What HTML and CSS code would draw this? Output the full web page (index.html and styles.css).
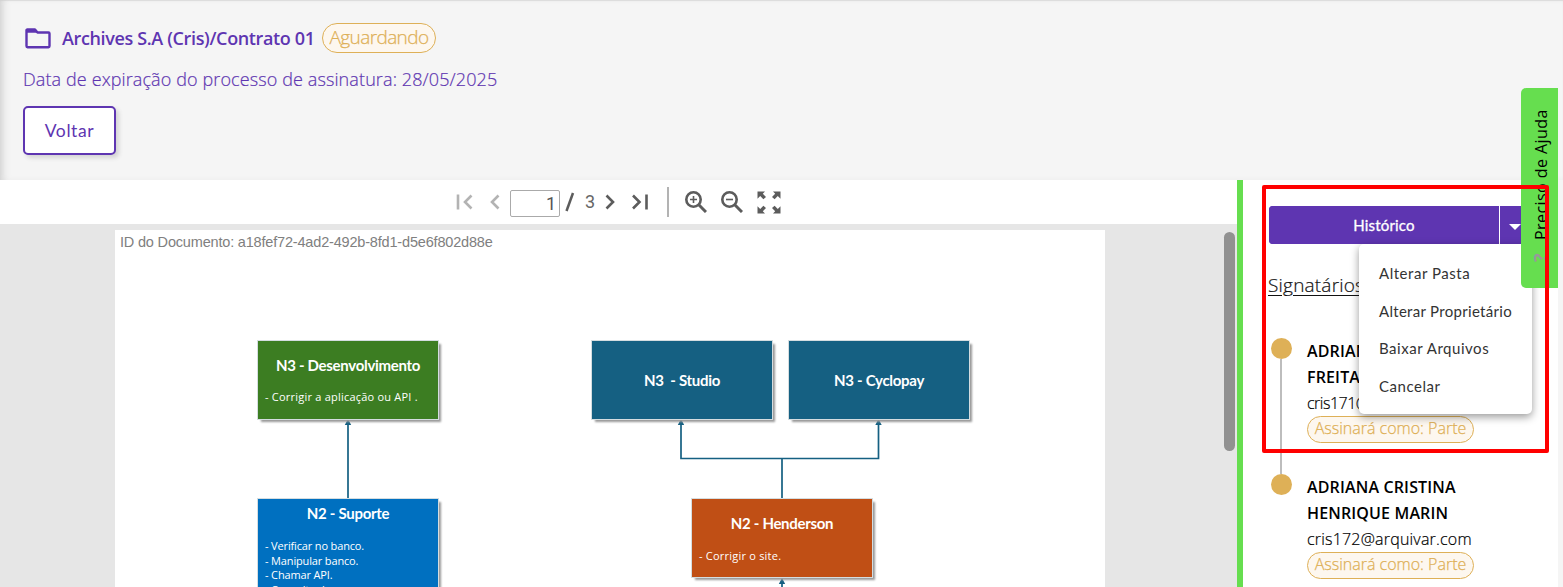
FILE: index.html
```
<!DOCTYPE html>
<html lang="pt-BR">
<head>
<meta charset="utf-8">
<title>Contrato 01</title>
<link rel="stylesheet" href="styles.css">
</head>
<body>
<div class="app">
  <header class="header">
    <div class="title-row">
      <svg class="folder" viewBox="0 0 26 21"><path d="M2.2 1.5H10l2.5 3H23.5q1 0 1 1V18q0 1.200-1 1.200H2.500q-1 0-1-1.200V2z" fill="none" stroke="#5e35b1" stroke-width="2.400" stroke-linejoin="round"/><path d="M1.500 1.200H10l3 3.500H1.500z" fill="#5e35b1"/></svg>
      <h1 class="title">Archives S.A (Cris)/Contrato 01</h1>
      <span class="status">Aguardando</span>
    </div>
    <p class="expiry">Data de expiração do processo de assinatura: 28/05/2025</p>
    <button class="back">Voltar</button>
  </header>
  <div class="body">
    <main class="viewer">
      <div class="toolbar">
        <svg class="ic first" viewBox="0 0 18 18"><path d="M2 1.500V16.500M15.500 2.500L9 9l6.500 6.500"/></svg>
        <svg class="ic prev" viewBox="0 0 10 18"><path d="M8.500 2.500L2 9l6.500 6.500"/></svg>
        <div class="page-input">1</div>
        <svg class="slash" viewBox="0 0 10 20"><path d="M1.500 19L8 1"/></svg>
        <span class="total">3</span>
        <svg class="ic next" viewBox="0 0 10 18"><path d="M1.500 2.500L8 9l-6.500 6.500"/></svg>
        <svg class="ic last" viewBox="0 0 18 18"><path d="M2 2.500L8.500 9 2 15.500M15.500 1.500V16.500"/></svg>
        <span class="divider"></span>
        <svg class="ic zoom" viewBox="0 0 22 22"><circle cx="8.500" cy="8.500" r="7.200"/><path d="M13.500 13.500L21 21" stroke-width="3"/><path d="M5 8.500h7M8.500 5v7" stroke-width="1.600"/></svg>
        <svg class="ic zoom out" viewBox="0 0 22 22"><circle cx="8.500" cy="8.500" r="7.200"/><path d="M13.500 13.500L21 21" stroke-width="3"/><path d="M5 8.500h7" stroke-width="1.600"/></svg>
        <svg class="full" viewBox="0 0 24 23"><g id="c"><path d="M.5.5H8L5.800 2.700 9 5.900 6.400 8.300 3.200 5.100.5 7.800z"/></g><use href="#c" transform="matrix(-1 0 0 1 24 0)"/><use href="#c" transform="matrix(1 0 0 -1 0 23)"/><use href="#c" transform="matrix(-1 0 0 -1 24 23)"/></svg>
      </div>
      <div class="canvas">
        <div class="sheet">
          <p class="doc-id">ID do Documento: a18fef72-4ad2-492b-8fd1-d5e6f802d88e</p>
          <svg class="edges" viewBox="0 0 990 357" fill="none" stroke="#156082" stroke-width="1.700">
            <path d="M233 269V194M667 269V228.500M566 194V228.500H763.500V194M667 357V352"/>
            <path stroke="none" fill="#156082" d="M233 189l3.200 6h-6.400zM566 189l3.200 6h-6.400zM763.500 189l3.200 6h-6.400zM667 348l3.200 6h-6.400z"/>
          </svg>
          <section class="node dev"><h2>N3 - Desenvolvimento</h2><p>- Corrigir a aplicação ou API .</p></section>
          <section class="node studio"><h2>N3 &nbsp;- Studio</h2></section>
          <section class="node cyclo"><h2>N3 - Cyclopay</h2></section>
          <section class="node sup"><h2>N2 - Suporte</h2><p>- Verificar no banco.<br>- Manipular banco.<br>- Chamar API.<br>- Consultar logs.</p></section>
          <section class="node hend"><h2>N2 - Henderson</h2><p>- Corrigir o site.</p></section>
        </div>
        <div class="scroll"></div>
      </div>
    </main>
    <aside class="side">
      <div class="split"><button class="hist">Histórico</button><button class="caret"><i></i></button></div>
      <h3 class="signers">Signatários</h3>
      <ul class="steps">
        <li><b>ADRIANA</b><b>FREITAS</b><em class="mail-tight">cris171@arquivar.com</em><small class="role">Assinará como: Parte</small></li>
        <li><b>ADRIANA CRISTINA</b><b>HENRIQUE MARIN</b><em>cris172@arquivar.com</em><small class="role">Assinará como: Parte</small></li>
      </ul>
      <nav class="menu"><a>Alterar Pasta</a><a class="long">Alterar Proprietário</a><a>Baixar Arquivos</a><a>Cancelar</a></nav>
    </aside>
  </div>
  <div class="help"><span class="q">?</span><span class="help-text">Preciso de Ajuda</span></div>
  <div class="highlight"></div>
</div>
</body>
</html>
```
FILE: styles.css
```
* { box-sizing: border-box; }
body { margin: 0; font-family: "Open Sans", "Noto Sans", sans-serif; color: #111; }
h1, h2, h3, p, ul { margin: 0; padding: 0; font-weight: 400; }
button { font: inherit; padding: 0; margin: 0; border: 0; }
.app { position: relative; width: 1563px; height: 587px; overflow: hidden; display: flex; flex-direction: column; background: #f5f5f5; }
.header { height: 180px; flex: none; padding: 23px 23px 0; background: #f5f5f5; box-shadow: inset 7px 0 8px -5px #ccc, inset 0 1px 1px #ddd; color: #5e35b1; }
.title-row { display: flex; align-items: center; height: 30px; }
.folder { width: 26px; height: 21px; margin: 0 11px 0 2px; }
.title { width: 260px; font-size: 18px; font-weight: 600; line-height: 29px; letter-spacing: -.36px; white-space: nowrap; }
.status { height: 30px; width: 114px; border: 1px solid #deb057; border-radius: 15px; background: #fdf7ef; color: #deb057; font-size: 19px; font-weight: 300; letter-spacing: -.6px; line-height: 27px; text-align: center; -webkit-text-stroke: .25px; }
.expiry { margin-top: 13px; font-size: 18px; font-weight: 300; letter-spacing: .11px; line-height: 26px; white-space: nowrap; -webkit-text-stroke: .2px; }
.back { display: block; width: 93px; height: 49px; margin-top: 14px; border: 2px solid #5e35b1; border-radius: 5px; background: #fff; color: #5e35b1; font-family: Lato, sans-serif; font-size: 17.500px; letter-spacing: .6px; box-shadow: 3px 3px 4px #d4d4d4; }
.body { display: flex; flex: 1; min-height: 0; width: 1558px; background: #fff; }
.viewer { width: 1237px; display: flex; flex-direction: column; }
.toolbar { height: 44px; display: flex; align-items: center; padding-left: 456px; }
.ic { fill: none; stroke: #5c5c5c; stroke-width: 2.600; flex: none; height: 18px; }
.first { width: 18px; stroke: #b3b3b3; }
.prev { width: 10px; margin-left: 16px; stroke: #b3b3b3; }
.page-input { width: 50px; height: 27px; margin: 3px 0 0 10px; border: 1px solid #aaa; border-radius: 2px; text-align: right; padding-right: 3px; font: 18px/25px Roboto, sans-serif; color: #555; }
.slash { width: 10px; height: 20px; margin-left: 5px; fill: none; stroke: #5c5c5c; stroke-width: 2.500; }
.total { margin-left: 10px; font: 18px/20px Roboto, sans-serif; color: #666; }
.next { width: 10px; margin-left: 10px; }
.last { width: 18px; margin-left: 16px; }
.divider { width: 2px; height: 30px; margin-left: 18px; background: #b3b3b3; }
.zoom { width: 22px; height: 22px; margin-left: 16px; }
.out { margin-left: 14px; }
.full { width: 24px; height: 23px; margin-left: 14px; fill: #5c5c5c; }
.canvas { flex: 1; min-height: 0; display: flex; background: #e6e6e6; padding: 6px 0 0 115px; }
.sheet { position: relative; width: 990px; background: #fff; overflow: hidden; }
.doc-id { padding: 3px 0 0 5px; font: 14.500px/18px "Liberation Sans", Arial, sans-serif; letter-spacing: -.18px; color: #808080; }
.edges { position: absolute; left: 0; top: 0; width: 990px; height: 357px; }
.node { position: absolute; width: 180px; height: 78px; color: #fff; outline: 1px solid #d5dde0; box-shadow: 3px 3px 2px 0 #999; font-family: Lato, sans-serif; }
.node h2 { font-size: 15px; font-weight: 700; letter-spacing: -.3px; line-height: 18px; text-align: center; }
.node p { padding-left: 7px; font: 11px/14.500px "Open Sans", sans-serif; letter-spacing: .22px; white-space: nowrap; }
.dev { left: 143px; top: 111px; background: #3c7d22; padding-top: 15px; }
.dev p { padding-top: 16px; }
.studio, .cyclo { top: 111px; background: #156082; padding-top: 30px; }
.studio { left: 477px; }
.cyclo { left: 674px; }
.sup { left: 143px; top: 269px; height: 120px; background: #0070c0; padding-top: 5px; }
.sup p { padding-top: 17px; letter-spacing: -.15px; }
.hend { left: 577px; top: 269px; background: #c04f15; padding-top: 15px; }
.hend p { padding-top: 17px; }
.scroll { width: 11px; height: 219px; margin: 2px 0 0 119px; border-radius: 6px; background: #919191; }
.side { position: relative; width: 321px; border-left: 6px solid #66de4f; padding: 26px 0 0 25px; }
.split { display: flex; height: 38px; width: 265px; margin-left: 1px; border-radius: 4px; overflow: hidden; background: #5e35b1; }
.hist { width: 230px; background: #5e35b1; color: #fff; font: 15px Lato, sans-serif; letter-spacing: .17px; -webkit-text-stroke: .3px; }
.caret { flex: 1; display: flex; align-items: center; padding-left: 9px; background: #5e35b1; border-left: 1px solid #fff; }
.caret i { border: 6px solid transparent; border-top-color: #fff; border-bottom: 0; margin-top: 4px; }
.signers { margin-top: 27px; font-size: 19px; font-weight: 300; letter-spacing: .2px; line-height: 28px; text-decoration: underline; text-underline-offset: 3px; -webkit-text-stroke: .2px; }
.steps { list-style: none; margin-top: 39px; }
.steps li { position: relative; height: 136px; padding-left: 39px; white-space: nowrap; }
.steps li::before { content: ""; position: absolute; left: 3px; top: 0; width: 21px; height: 21px; border-radius: 50%; background: #deb057; }
.steps li:first-child::after { content: ""; position: absolute; left: 12px; top: 21px; width: 2px; height: 115px; background: #bdbdbd; }
.steps b, .steps em { display: block; font-size: 16px; font-style: normal; line-height: 26px; color: #000; }
.steps b { font-weight: 600; letter-spacing: .15px; }
.steps em { font-weight: 300; letter-spacing: .2px; -webkit-text-stroke: .2px; }
.steps .mail-tight { letter-spacing: -.5px; }
.role { display: block; width: 167px; height: 27px; border: 1px solid #deb057; border-radius: 14px; background: #fdf7ef; color: #deb057; font-size: 16px; line-height: 23px; text-align: center; font-weight: 300; -webkit-text-stroke: .25px; }
.menu { position: absolute; left: 116px; top: 64px; width: 173px; height: 170px; padding: 11px 20px 9px; border-radius: 5px; background: #fff; box-shadow: 0 3px 8px rgba(0,0,0,.4); }
.menu a { display: block; font: 15px/37.700px Lato, sans-serif; letter-spacing: .53px; color: #333; white-space: nowrap; }
.menu .long { letter-spacing: .3px; }
.help { position: absolute; left: 1521px; top: 88px; width: 37px; height: 200px; padding: 26px 0 0; display: flex; gap: 13px; align-items: center; writing-mode: vertical-rl; transform: rotate(180deg); border-radius: 0 5px 5px 0; background: #66de4f; color: #000; font-size: 16px; }
.help-text { letter-spacing: .44px; padding-right: 3px; }
.q { color: #999; font-size: 18px; font-weight: 700; }
.highlight { position: absolute; left: 1262px; top: 185px; width: 287px; height: 268px; border: 4px solid #f00; border-radius: 2px; }
```
